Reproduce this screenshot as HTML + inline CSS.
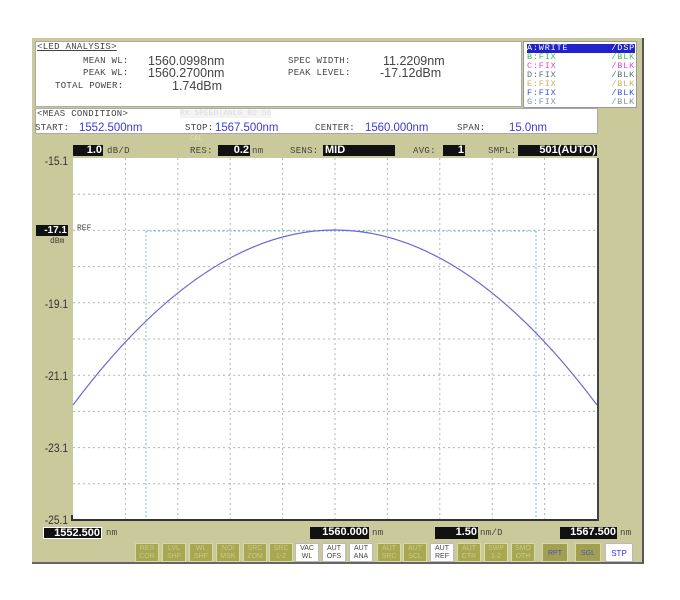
<!DOCTYPE html>
<html><head><meta charset="utf-8"><style>
*{margin:0;padding:0;box-sizing:border-box}
body{width:680px;height:600px;background:#fff;position:relative;overflow:hidden;font-family:"Liberation Mono","DejaVu Sans Mono",monospace;}
.a{position:absolute;white-space:nowrap;line-height:1}
.lbl{font-size:9px;color:#444;letter-spacing:0.3px}
.val{font-size:12.5px;color:#444;font-family:"Liberation Sans",sans-serif}
.blue{font-size:12px;color:#3a3ad0;font-family:"Liberation Sans",sans-serif;transform:scaleX(0.95);transform-origin:left}
.bx{position:absolute;background:#111;color:#fff;font-size:11px;font-weight:bold;text-align:right;line-height:11px;height:11px;padding-right:1px;font-family:"Liberation Sans",sans-serif}
.yl{position:absolute;font-family:"Liberation Sans",sans-serif;font-size:12px;color:#333;width:36px;text-align:right;left:32px;transform:scaleX(0.85);transform-origin:right}
.btn{position:absolute;top:543px;width:24px;height:19px;background:#a8a850;border:1px solid #d8d8a8;font-size:7px;line-height:8px;text-align:center;color:#c8c890;font-family:"Liberation Sans",sans-serif;padding-top:1px}
.btn.w{background:#fff;color:#444;border-color:#bbb}
.lg{position:absolute;left:527px;font-size:8.5px;line-height:9px;width:108px;letter-spacing:0.8px}
.lg span{float:right}
</style></head><body>
<div class="a" style="left:32px;top:38px;width:612px;height:526px;background:#c9c99c;border-right:2px solid #555;border-bottom:2px solid #666"></div>
<div class="a" style="left:35px;top:41px;width:487px;height:66px;background:#fff;border:1px solid #aaa"></div>
<div class="a lbl" style="left:37px;top:43px;text-decoration:underline">&lt;LED ANALYSIS&gt;</div>
<div class="a lbl" style="left:83px;top:57px">MEAN WL:</div>
<div class="a lbl" style="left:83px;top:69px">PEAK WL:</div>
<div class="a lbl" style="left:55px;top:82px">TOTAL POWER:</div>
<div class="a val" style="left:148px;top:55px">1560.0998nm</div>
<div class="a val" style="left:148px;top:67px">1560.2700nm</div>
<div class="a val" style="left:172px;top:80px">1.74dBm</div>
<div class="a lbl" style="left:288px;top:57px">SPEC WIDTH:</div>
<div class="a lbl" style="left:288px;top:69px">PEAK LEVEL:</div>
<div class="a val" style="left:383px;top:55px">11.2209nm</div>
<div class="a val" style="left:380px;top:67px">-17.12dBm</div>
<div class="a" style="left:523px;top:41px;width:114px;height:67px;background:#fff;border:1px solid #999"></div>
<div class="lg" style="top:44px;background:#2222cc;color:#fff">A:WRITE<span>/DSP</span></div>
<div class="lg" style="top:53px;color:#44bb44">B:FIX<span>/BLK</span></div>
<div class="lg" style="top:62px;color:#dd44dd">C:FIX<span>/BLK</span></div>
<div class="lg" style="top:71px;color:#557070">D:FIX<span>/BLK</span></div>
<div class="lg" style="top:80px;color:#c8b060">E:FIX<span>/BLK</span></div>
<div class="lg" style="top:89px;color:#3355dd">F:FIX<span>/BLK</span></div>
<div class="lg" style="top:98px;color:#8090a0">G:FIX<span>/BLK</span></div>
<div class="a" style="left:35px;top:108px;width:563px;height:26px;background:#fff;border:1px solid #aaa"></div>
<div class="a lbl" style="left:37px;top:110px">&lt;MEAS CONDITION&gt;</div>
<div class="a" style="left:180px;top:110px;font-size:8px;color:#ddd;background:#f4f4f4">RX SPEED|ANLG BD 50</div>
<div class="a lbl" style="left:35px;top:124px">START:</div>
<div class="a blue" style="left:79px;top:121px">1552.500nm</div>
<div class="a lbl" style="left:185px;top:124px">STOP:</div>
<div class="a blue" style="left:215px;top:121px">1567.500nm</div>
<div class="a lbl" style="left:315px;top:124px">CENTER:</div>
<div class="a blue" style="left:365px;top:121px">1560.000nm</div>
<div class="a lbl" style="left:457px;top:124px">SPAN:</div>
<div class="a blue" style="left:509px;top:121px">15.0nm</div>
<div class="a" style="left:190px;top:136px;font-size:7px;color:#e0e0b0">CAL</div>
<div class="bx" style="left:73px;top:145px;width:30px">1.0</div>
<div class="a lbl" style="left:107px;top:147px">dB/D</div>
<div class="a lbl" style="left:190px;top:147px">RES:</div>
<div class="bx" style="left:218px;top:145px;width:32px">0.2</div>
<div class="a lbl" style="left:252px;top:147px">nm</div>
<div class="a lbl" style="left:290px;top:147px">SENS:</div>
<div class="bx" style="left:323px;top:145px;width:72px;text-align:left;padding-left:2px">MID</div>
<div class="a lbl" style="left:413px;top:147px">AVG:</div>
<div class="bx" style="left:443px;top:145px;width:22px">1</div>
<div class="a lbl" style="left:488px;top:147px">SMPL:</div>
<div class="bx" style="left:518px;top:145px;width:79px">501(AUTO)</div>
<svg class="a" style="left:0;top:0" width="680" height="600">
<rect x="73" y="158" width="524" height="362" fill="#fff"/>
<g stroke="#b4b4b4" stroke-width="1" stroke-dasharray="2,3">
<line x1="125.4" y1="158" x2="125.4" y2="520"/><line x1="177.8" y1="158" x2="177.8" y2="520"/>
<line x1="230.2" y1="158" x2="230.2" y2="520"/><line x1="282.6" y1="158" x2="282.6" y2="520"/>
<line x1="335" y1="158" x2="335" y2="520"/><line x1="387.4" y1="158" x2="387.4" y2="520"/>
<line x1="439.8" y1="158" x2="439.8" y2="520"/><line x1="492.2" y1="158" x2="492.2" y2="520"/>
<line x1="544.6" y1="158" x2="544.6" y2="520"/>
<line x1="73" y1="194.2" x2="597" y2="194.2"/><line x1="73" y1="230.4" x2="597" y2="230.4"/>
<line x1="73" y1="266.6" x2="597" y2="266.6"/><line x1="73" y1="302.8" x2="597" y2="302.8"/>
<line x1="73" y1="339" x2="597" y2="339"/><line x1="73" y1="375.2" x2="597" y2="375.2"/>
<line x1="73" y1="411.4" x2="597" y2="411.4"/><line x1="73" y1="447.6" x2="597" y2="447.6"/>
<line x1="73" y1="483.8" x2="597" y2="483.8"/>
</g>
<g stroke="#66c4c4" stroke-width="1" stroke-dasharray="2,2" fill="none">
<line x1="146" y1="231" x2="536" y2="231"/><line x1="146" y1="231" x2="146" y2="520"/><line x1="536" y1="231" x2="536" y2="520"/>
</g>
<path d="M73 405 Q335 55 597 405" fill="none" stroke="#6a6ad4" stroke-width="1.2"/>
<line x1="72" y1="520" x2="598" y2="520" stroke="#333" stroke-width="2"/>
<line x1="598" y1="158" x2="598" y2="521" stroke="#444" stroke-width="2"/>
<line x1="72" y1="515" x2="72" y2="521" stroke="#333" stroke-width="2"/>
</svg>
<div class="a" style="left:77px;top:225px;font-size:8px;color:#444">REF</div>
<div class="yl" style="top:154px">-15.1</div>
<div class="bx" style="left:36px;top:225px;width:32px;font-size:10px">-17.1</div>
<div class="a" style="left:50px;top:238px;font-size:8px;color:#444">dBm</div>
<div class="yl" style="top:297px">-19.1</div>
<div class="yl" style="top:369px">-21.1</div>
<div class="yl" style="top:441px">-23.1</div>
<div class="yl" style="top:513px">-25.1</div>
<div class="bx" style="left:43px;top:527px;width:59px;border:1px solid #fff;height:12px">1552.500</div>
<div class="a lbl" style="left:106px;top:529px">nm</div>
<div class="bx" style="left:310px;top:527px;width:59px;height:12px">1560.000</div>
<div class="a lbl" style="left:372px;top:529px">nm</div>
<div class="bx" style="left:435px;top:527px;width:43px;height:12px">1.50</div>
<div class="a lbl" style="left:480px;top:529px">nm/D</div>
<div class="bx" style="left:560px;top:527px;width:57px;height:12px">1567.500</div>
<div class="a lbl" style="left:620px;top:529px">nm</div>
<div class="btn" style="left:135px">RES<br>COR</div>
<div class="btn" style="left:162px">LVL<br>SHF</div>
<div class="btn" style="left:189px">WL<br>SHF</div>
<div class="btn" style="left:216px">NOI<br>MSK</div>
<div class="btn" style="left:243px">SRC<br>ZOM</div>
<div class="btn" style="left:269px">SRC<br>1-2</div>
<div class="btn w" style="left:295px">VAC<br>WL</div>
<div class="btn w" style="left:322px">AUT<br>OFS</div>
<div class="btn w" style="left:349px">AUT<br>ANA</div>
<div class="btn" style="left:377px">AUT<br>SRC</div>
<div class="btn" style="left:403px">AUT<br>SCL</div>
<div class="btn w" style="left:430px">AUT<br>REF</div>
<div class="btn" style="left:457px">AUT<br>CTR</div>
<div class="btn" style="left:484px">SWP<br>1-2</div>
<div class="btn" style="left:511px">SMO<br>OTH</div>
<div class="btn" style="left:542px;width:26px;line-height:17px;color:#5050c0;background:#a0a050">RPT</div>
<div class="btn" style="left:575px;width:26px;line-height:17px;color:#5050c0;background:#a0a050">SGL</div>
<div class="btn w" style="left:605px;width:28px;line-height:17px;color:#3333cc;font-size:8px">STP</div>
</body></html>
